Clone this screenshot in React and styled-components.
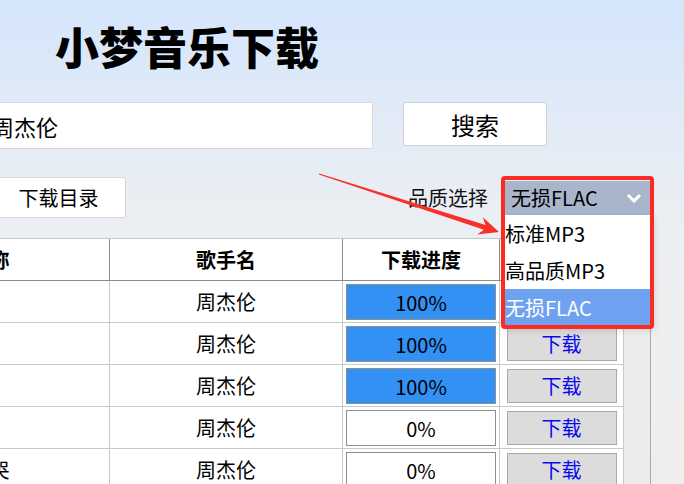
import React from 'react';
import styled, { createGlobalStyle } from 'styled-components';

const GlobalStyle = createGlobalStyle`
body{
  margin:0;
  font-family:"Noto Sans CJK SC", "Noto Sans", sans-serif;
}
`;

const Page = styled.div`
position:relative;
width:684px;
height:484px;
overflow:hidden;
background:linear-gradient(180deg, #d5e5fb 0px, #dae8f9 60px, #e3ebf6 130px, #eaeef3 200px, #eeeff1 300px, #eeeeee 484px);
color:#000;
`;

const Window = styled.div`
margin-left:-170px;
padding-top:24px;
`;

const Title = styled.h1`
margin:0;
padding-left:225px;
font-size:44px;
line-height:44px;
font-weight:900;
`;

const SearchRow = styled.div`
display:flex;
align-items:flex-start;
gap:30px;
margin-top:34px;
padding-left:158px;
`;

const SearchInput = styled.input`
box-sizing:border-box;
width:385px;
height:47px;
padding:0 3px;
border:1px solid #dadada;
background:#fff;
font-family:inherit;
font-size:22px;
color:#000;
outline:none;
`;

const SearchButton = styled.button`
box-sizing:border-box;
width:144px;
height:44px;
border:1px solid #cfcfcf;
border-radius:3px;
background:#fff;
font-family:inherit;
font-size:24px;
color:#000;
`;

const ToolRow = styled.div`
box-sizing:border-box;
display:flex;
align-items:center;
justify-content:space-between;
width:820px;
height:41px;
margin-top:28px;
padding-left:161px;
`;

const DirButton = styled.button`
box-sizing:border-box;
width:135px;
height:41px;
border:1px solid #d6d6d6;
border-radius:2px;
background:#fff;
font-family:inherit;
font-size:20px;
color:#000;
`;

const QualityGroup = styled.div`
display:flex;
align-items:center;
gap:16px;
`;

const QualityLabel = styled.span`
font-size:20px;
color:#111;
`;

const ComboWrap = styled.div`
position:relative;
width:146px;
`;

const ComboBox = styled.div`
box-sizing:border-box;
display:flex;
align-items:center;
justify-content:space-between;
height:34px;
padding:0 8px 0 7px;
background:#a9b5cb;
font-size:20px;
`;

const PopupList = styled.ul`
position:absolute;
top:100%;
left:0;
right:0;
margin:0;
padding:0;
list-style:none;
background:#fff;
box-shadow:3px 3px 8px rgba(0,0,0,0.18);
z-index:2;
`;

const Option = styled.li`
height:37px;
line-height:37px;
padding-left:1px;
font-size:20px;
background:${p => (p.$active ? '#6ea2f1' : '#fff')};
color:${p => (p.$active ? '#fff' : '#000')};
`;

const Highlight = styled.div`
position:absolute;
top:-5px;
left:-3px;
box-sizing:border-box;
width:153px;
height:153px;
border:4px solid #fb2a22;
border-radius:4px;
pointer-events:none;
z-index:3;
`;

const TableBox = styled.div`
box-sizing:border-box;
width:821px;
height:300px;
margin-top:20px;
border-top:1px solid #c6c6c6;
border-right:1px solid #a9a9a9;
background:#ececec;
`;

const Grid = styled.div`
display:grid;
grid-template-columns:280px 233px 157px 124px;
grid-auto-rows:42px;
`;

const HeadCell = styled.div`
box-sizing:border-box;
display:flex;
align-items:center;
justify-content:center;
background:#fff;
border-right:1px solid #8c8c8c;
border-bottom:1px solid #8c8c8c;
font-size:20px;
font-weight:700;
white-space:nowrap;
`;

const Cell = styled.div`
box-sizing:border-box;
display:flex;
align-items:center;
justify-content:center;
background:#fff;
border-right:1px solid #c9c9c9;
border-bottom:1px solid #c9c9c9;
font-size:20px;
white-space:nowrap;
`;

const Progress = styled.div`
box-sizing:border-box;
display:flex;
align-items:center;
justify-content:center;
width:150px;
height:36px;
margin-top:1px;
border:1px solid #8e8e8e;
background:linear-gradient(to right, #3391f4 ${p => p.$value}%, #fff ${p => p.$value}%);
font-size:20px;
`;

const DownloadButton = styled.button`
box-sizing:border-box;
width:110px;
height:34px;
border:1px solid #a9a9a9;
background:#dcdcdc;
font-family:inherit;
font-size:20px;
color:#0a0aee;
`;

const Arrow = styled.svg`
position:absolute;
left:0;
top:0;
pointer-events:none;
z-index:4;
`;

const songs = [
    { name: '晴天', singer: '周杰伦', progress: 100 },
    { name: '稻香', singer: '周杰伦', progress: 100 },
    { name: '夜曲', singer: '周杰伦', progress: 100 },
    { name: '搁浅', singer: '周杰伦', progress: 0 },
    { name: '说好不哭', singer: '周杰伦', progress: 0 },
];

const qualities = ['标准MP3', '高品质MP3', '无损FLAC'];

const App = () => {
    return (
        <Page>
            <GlobalStyle />
            <Window>
                <Title>小梦音乐下载</Title>
                <SearchRow>
                    <SearchInput defaultValue="周杰伦" />
                    <SearchButton>搜索</SearchButton>
                </SearchRow>
                <ToolRow>
                    <DirButton>下载目录</DirButton>
                    <QualityGroup>
                        <QualityLabel>品质选择</QualityLabel>
                        <ComboWrap>
                            <ComboBox>
                                <span>无损FLAC</span>
                                <svg width="16" height="10" viewBox="0 0 16 10">
                                    <polyline points="2,2 8,8 14,2" fill="none" stroke="#fff" strokeWidth="3" />
                                </svg>
                            </ComboBox>
                            <PopupList>
                                {qualities.map((q, index) => (
                                    <Option key={q} $active={index === 2}>{q}</Option>
                                ))}
                            </PopupList>
                            <Highlight />
                        </ComboWrap>
                    </QualityGroup>
                </ToolRow>
                <TableBox>
                    <Grid>
                        <HeadCell>歌曲名称</HeadCell>
                        <HeadCell>歌手名</HeadCell>
                        <HeadCell>下载进度</HeadCell>
                        <HeadCell>操作</HeadCell>
                        {songs.map((song, index) => (
                            <React.Fragment key={index}>
                                <Cell>{song.name}</Cell>
                                <Cell>{song.singer}</Cell>
                                <Cell>
                                    <Progress $value={song.progress}>{song.progress}%</Progress>
                                </Cell>
                                <Cell>
                                    <DownloadButton>下载</DownloadButton>
                                </Cell>
                            </React.Fragment>
                        ))}
                    </Grid>
                </TableBox>
            </Window>
            <Arrow width="684" height="484" viewBox="0 0 684 484">
                <polygon
                    fill="#f8302a"
                    points="318.8,174.6 483.9,229.8 477.2,234.5 499,232 482.8,217.3 485.5,225 319.2,173.4"
                />
            </Arrow>
        </Page>
    );
};

export default App;
